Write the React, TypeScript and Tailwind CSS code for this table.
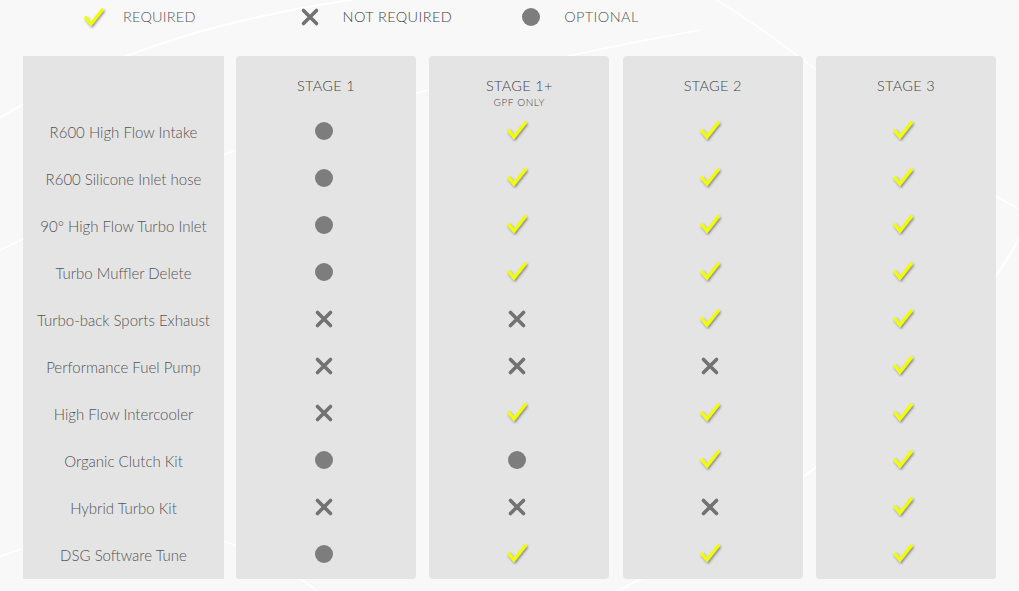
import React from "react";

type V = "r" | "n" | "o";

const rows: { label: string; v: V[] }[] = [
  { label: "R600 High Flow Intake", v: ["o", "r", "r", "r"] },
  { label: "R600 Silicone Inlet hose", v: ["o", "r", "r", "r"] },
  { label: "90° High Flow Turbo Inlet", v: ["o", "r", "r", "r"] },
  { label: "Turbo Muffler Delete", v: ["o", "r", "r", "r"] },
  { label: "Turbo-back Sports Exhaust", v: ["n", "n", "r", "r"] },
  { label: "Performance Fuel Pump", v: ["n", "n", "n", "r"] },
  { label: "High Flow Intercooler", v: ["n", "r", "r", "r"] },
  { label: "Organic Clutch Kit", v: ["o", "o", "r", "r"] },
  { label: "Hybrid Turbo Kit", v: ["n", "n", "n", "r"] },
  { label: "DSG Software Tune", v: ["o", "r", "r", "r"] },
];

const stages = [
  { title: "STAGE 1" },
  { title: "STAGE 1+", sub: "GPF ONLY" },
  { title: "STAGE 2" },
  { title: "STAGE 3" },
];

function Check() {
  return (
    <svg width="26" height="26" viewBox="0 0 26 26" className="block">
      <defs>
        <filter id="sh" x="-30%" y="-30%" width="160%" height="160%">
          <feDropShadow dx="1" dy="1.5" stdDeviation="1.2" floodColor="#333" floodOpacity="0.55" />
        </filter>
      </defs>
      <polyline
        points="5,14 10,20 21,6"
        fill="none"
        stroke="#f2ff00"
        strokeWidth="3.2"
        strokeLinecap="square"
        strokeLinejoin="miter"
        filter="url(#sh)"
      />
    </svg>
  );
}

function Cross() {
  return (
    <svg width="20" height="20" viewBox="0 0 20 20" className="block">
      <path d="M3.5 3.5 L16.5 16.5 M16.5 3.5 L3.5 16.5" stroke="#727272" strokeWidth="3.6" strokeLinecap="round" />
    </svg>
  );
}

function Dot() {
  return <div className="w-[18px] h-[18px] rounded-full bg-[#7d7d7d]" />;
}

function Icon({ v }: { v: V }) {
  if (v === "r") return <Check />;
  if (v === "n") return <Cross />;
  return <Dot />;
}

export default function App() {
  return (
    <div
      className="relative w-[1019px] h-[591px] bg-[#f8f8f8] overflow-hidden text-[#666]"
      style={{ fontFamily: "Lato, 'Open Sans', sans-serif" }}
    >
      <svg className="absolute inset-0 pointer-events-none" width="1019" height="591" viewBox="0 0 1019 591">
        <path d="M-20 130 C 120 40, 260 10, 420 -10" stroke="#ffffff" strokeWidth="2" fill="none" />
        <path d="M-20 260 C 200 150, 420 80, 700 30" stroke="#ffffff" strokeWidth="1.5" fill="none" />
        <path d="M600 600 C 800 500, 950 380, 1040 200" stroke="#ffffff" strokeWidth="2" fill="none" />
        <path d="M700 -10 C 820 60, 900 150, 1040 220" stroke="#ffffff" strokeWidth="1.5" fill="none" />
        <path d="M-10 560 C 100 520, 200 500, 330 600" stroke="#ffffff" strokeWidth="1.5" fill="none" />
      </svg>

      <div className="relative">
        {/* Legend */}
        <div className="flex items-center h-[34px]">
          <div className="ml-[81px]">
            <Check />
          </div>
          <span className="ml-[16px] text-[14.5px] font-light text-[#555] tracking-[0.2px]">REQUIRED</span>
          <div className="ml-[104px]">
            <Cross />
          </div>
          <span className="ml-[23px] text-[14.5px] font-light text-[#444] tracking-[0.4px]">NOT REQUIRED</span>
          <div className="ml-[70px]">
            <Dot />
          </div>
          <span className="ml-[24px] text-[14.5px] font-light text-[#555] tracking-[0.4px]">OPTIONAL</span>
        </div>

        {/* Table */}
        <div className="flex mt-[22px] ml-[23px]">
          <div className="w-[201px] h-[523px] bg-[#e4e4e4] pt-[51px] mr-[12px]">
            {rows.map((r) => (
              <div key={r.label} className="h-[47px] flex items-center justify-center text-[15px] text-[#555] font-light">
                <span className="relative top-[2px]">{r.label}</span>
              </div>
            ))}
          </div>
          <div className="flex gap-[13.33px]">
            {stages.map((s, i) => (
              <div key={s.title} className="w-[180px] h-[523px] bg-[#e4e4e4] rounded-[4px]">
                <div className="h-[51px] flex flex-col items-center pt-[22px]">
                  <div className="text-[14.5px] leading-[16px] text-[#444] font-light tracking-[0.3px]">{s.title}</div>
                  {s.sub && (
                    <div className="text-[10px] leading-[10px] text-[#444] font-light mt-[3px] tracking-[0.6px]">{s.sub}</div>
                  )}
                </div>
                {rows.map((r) => (
                  <div key={r.label} className="h-[47px] flex items-center justify-center pr-[5px]">
                    <div className={`relative ${r.v[i] === "r" ? "-top-[1px]" : "top-0"}`}>
                      <Icon v={r.v[i]} />
                    </div>
                  </div>
                ))}
              </div>
            ))}
          </div>
        </div>
      </div>
    </div>
  );
}
